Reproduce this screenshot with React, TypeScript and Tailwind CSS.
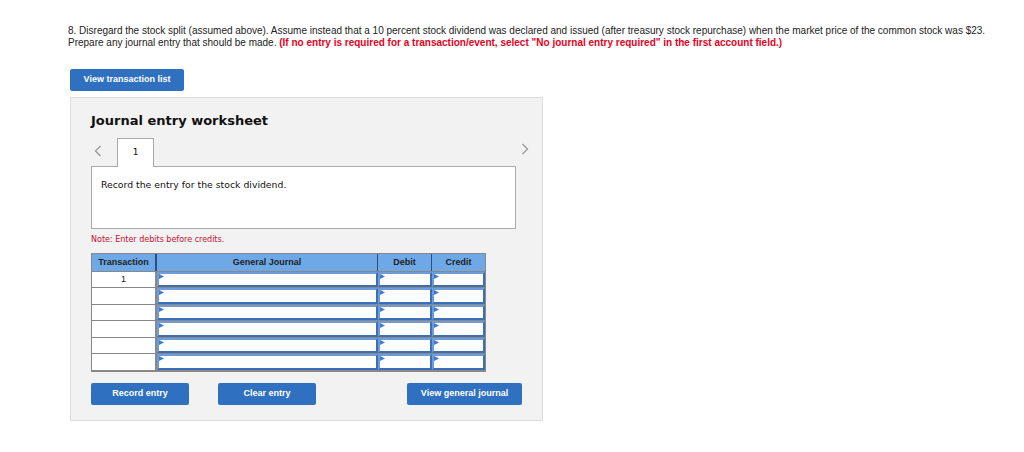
import React from 'react';

const verdana = { fontFamily: '"DejaVu Sans", Verdana, sans-serif' };
const arial = { fontFamily: '"Liberation Sans", Arial, sans-serif' };

const Arrow = () => (
  <svg width="5" height="5" viewBox="0 0 5 5" className="absolute left-0 top-0">
    <polygon points="0,0 5,2.5 0,5" fill="#3a7bd5" />
  </svg>
);

const InputCell: React.FC = () => (
  <div className="relative h-full border-2 border-[#3a6fb5] border-t-[#6f9bd6] border-l-[#6f9bd6] bg-white">
    <Arrow />
  </div>
);

const Btn: React.FC<{ label: string; w: string }> = ({ label, w }) => (
  <button className={`${w} h-[22px] rounded-[2px] bg-[#2f70c0] text-white text-[9px] font-bold`} style={arial}>
    {label}
  </button>
);

const rows = ['1', '', '', '', '', ''];

export default function App() {
  return (
    <div className="w-[1024px] h-[452px] bg-white" style={arial}>
      <div className="pl-[68px] pt-[25px] text-[10px] leading-[12px] text-[#222] whitespace-nowrap">
        <p>
          8. Disregard the stock split (assumed above). Assume instead that a 10 percent stock dividend was declared and issued (after treasury stock repurchase) when the market price of the common stock was $23.
        </p>
        <p>
          Prepare any journal entry that should be made.{' '}
          <span className="font-bold text-[#e8001c]">
            (If no entry is required for a transaction/event, select "No journal entry required" in the first account field.)
          </span>
        </p>
      </div>

      <div className="ml-[70px] mt-[16px]">
        <Btn label="View transaction list" w="w-[114px]" />
      </div>

      <div className="ml-[70px] mt-[6px] w-[473px] h-[324px] bg-[#f2f2f2] border border-[#dcdcdc] pl-[20px]" style={verdana}>
        <h2 className="mt-[15px] text-[13px] font-bold text-[#111] leading-[16px]">Journal entry worksheet</h2>

        <div className="mt-[8px] flex items-end h-[29px] w-[432px] relative">
          <div className="w-[26px] h-[29px] flex items-center pl-[3px]">
            <svg width="8" height="12" viewBox="0 0 8 12">
              <polyline points="6.5,1 1.5,6 6.5,11" fill="none" stroke="#999" strokeWidth="1.3" />
            </svg>
          </div>
          <div className="w-[37px] h-[29px] border border-[#aaa] border-b-0 bg-white relative z-10 -mb-[1px] flex items-center justify-center text-[9px] text-[#111]">
            1
          </div>
          <div className="absolute right-[-6px] top-[6px]">
            <svg width="8" height="12" viewBox="0 0 8 12">
              <polyline points="1.5,1 6.5,6 1.5,11" fill="none" stroke="#999" strokeWidth="1.3" />
            </svg>
          </div>
        </div>

        <div className="w-[425px] h-[63px] border border-[#aaa] bg-white px-[9px] pt-[11px] text-[9.3px] text-[#111]">
          Record the entry for the stock dividend.
        </div>

        <p className="mt-[5px] text-[8px] text-[#c8102e]">Note: Enter debits before credits.</p>

        <div className="mt-[7px] w-[395px] border border-[#888] border-b-[2px] bg-[#e6e6e6]">
          <div className="flex h-[17px] bg-[#6ea8e6] text-[9px] font-bold text-[#222]" style={arial}>
            <div className="w-[65px] flex items-center justify-center border-r-2 border-[#2b4f80]">Transaction</div>
            <div className="w-[221px] flex items-center justify-center border-r border-[#2b4f80]">General Journal</div>
            <div className="w-[54px] flex items-center justify-center border-r border-[#2b4f80]">Debit</div>
            <div className="flex-1 flex items-center justify-center">Credit</div>
          </div>
          {rows.map((r, i) => (
            <div key={i} className="flex h-[16.5px] border-t border-[#888]">
              <div className="w-[65px] bg-white border-r-2 border-[#888] text-center text-[9px] text-[#222] leading-[14px]" style={arial}>
                {r}
              </div>
              <div className="w-[221px]"><InputCell /></div>
              <div className="w-[54px]"><InputCell /></div>
              <div className="flex-1"><InputCell /></div>
            </div>
          ))}
        </div>

        <div className="mt-[11px] flex">
          <Btn label="Record entry" w="w-[98px]" />
          <div className="w-[29px]" />
          <Btn label="Clear entry" w="w-[98px]" />
          <div className="w-[91px]" />
          <Btn label="View general journal" w="w-[115px]" />
        </div>
      </div>
    </div>
  );
}
